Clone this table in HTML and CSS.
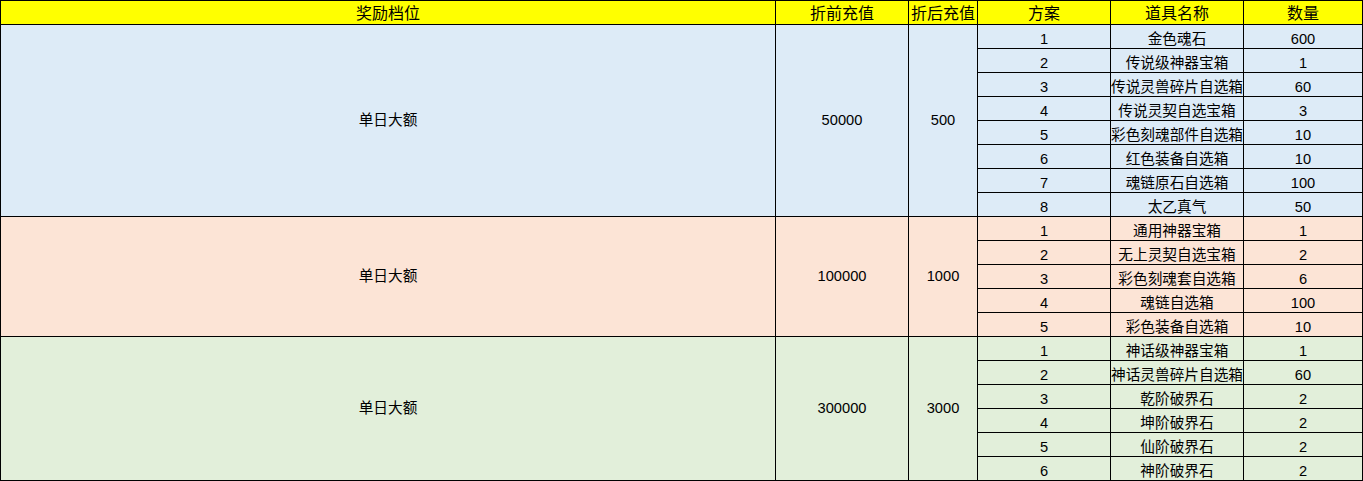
FILE: index.html
```html
<!DOCTYPE html>
<html lang="zh">
<head>
<meta charset="utf-8">
<title>奖励档位</title>
<link rel="stylesheet" href="styles.css">
</head>
<body>
<div class="sheet">
  <div class="cell head">奖励档位</div>
  <div class="cell head">折前充值</div>
  <div class="cell head">折后充值</div>
  <div class="cell head">方案</div>
  <div class="cell head">道具名称</div>
  <div class="cell head">数量</div>

  <div class="cell merged g1 span8">单日大额</div>
  <div class="cell merged g1 span8">50000</div>
  <div class="cell merged g1 span8">500</div>
  <div class="cell g1">1</div><div class="cell g1">金色魂石</div><div class="cell g1">600</div>
  <div class="cell g1">2</div><div class="cell g1">传说级神器宝箱</div><div class="cell g1">1</div>
  <div class="cell g1">3</div><div class="cell g1">传说灵兽碎片自选箱</div><div class="cell g1">60</div>
  <div class="cell g1">4</div><div class="cell g1">传说灵契自选宝箱</div><div class="cell g1">3</div>
  <div class="cell g1">5</div><div class="cell g1">彩色刻魂部件自选箱</div><div class="cell g1">10</div>
  <div class="cell g1">6</div><div class="cell g1">红色装备自选箱</div><div class="cell g1">10</div>
  <div class="cell g1">7</div><div class="cell g1">魂链原石自选箱</div><div class="cell g1">100</div>
  <div class="cell g1">8</div><div class="cell g1">太乙真气</div><div class="cell g1">50</div>

  <div class="cell merged g2 span5">单日大额</div>
  <div class="cell merged g2 span5">100000</div>
  <div class="cell merged g2 span5">1000</div>
  <div class="cell g2">1</div><div class="cell g2">通用神器宝箱</div><div class="cell g2">1</div>
  <div class="cell g2">2</div><div class="cell g2">无上灵契自选宝箱</div><div class="cell g2">2</div>
  <div class="cell g2">3</div><div class="cell g2">彩色刻魂套自选箱</div><div class="cell g2">6</div>
  <div class="cell g2">4</div><div class="cell g2">魂链自选箱</div><div class="cell g2">100</div>
  <div class="cell g2">5</div><div class="cell g2">彩色装备自选箱</div><div class="cell g2">10</div>

  <div class="cell merged g3 span6">单日大额</div>
  <div class="cell merged g3 span6">300000</div>
  <div class="cell merged g3 span6">3000</div>
  <div class="cell g3">1</div><div class="cell g3">神话级神器宝箱</div><div class="cell g3">1</div>
  <div class="cell g3">2</div><div class="cell g3">神话灵兽碎片自选箱</div><div class="cell g3">60</div>
  <div class="cell g3">3</div><div class="cell g3">乾阶破界石</div><div class="cell g3">2</div>
  <div class="cell g3">4</div><div class="cell g3">坤阶破界石</div><div class="cell g3">2</div>
  <div class="cell g3">5</div><div class="cell g3">仙阶破界石</div><div class="cell g3">2</div>
  <div class="cell g3">6</div><div class="cell g3">神阶破界石</div><div class="cell g3">2</div>
</div>
</body>
</html>
```

FILE: styles.css
```css
html, body {
  margin: 0;
  padding: 0;
  background: #ffffff;
}

.sheet {
  display: grid;
  grid-template-columns: 774px 132px 68px 132px 132px 118px;
  grid-auto-rows: 23px;
  gap: 1px;
  padding: 1px;
  background: #000000;
  width: max-content;
  font-family: "Liberation Sans", "Noto Sans CJK SC", sans-serif;
  font-size: 14.67px;
  color: #000000;
}

.cell {
  display: flex;
  align-items: flex-end;
  justify-content: center;
  white-space: nowrap;
  overflow: hidden;
  line-height: 17px;
}

.head {
  background: #ffff00;
  font-size: 16px;
  line-height: 20px;
}

.merged {
  align-items: center;
}

.span8 { grid-row: span 8; }
.span5 { grid-row: span 5; }
.span6 { grid-row: span 6; }

.g1 { background: #ddebf7; }
.g2 { background: #fce4d6; }
.g3 { background: #e2efda; }
```
